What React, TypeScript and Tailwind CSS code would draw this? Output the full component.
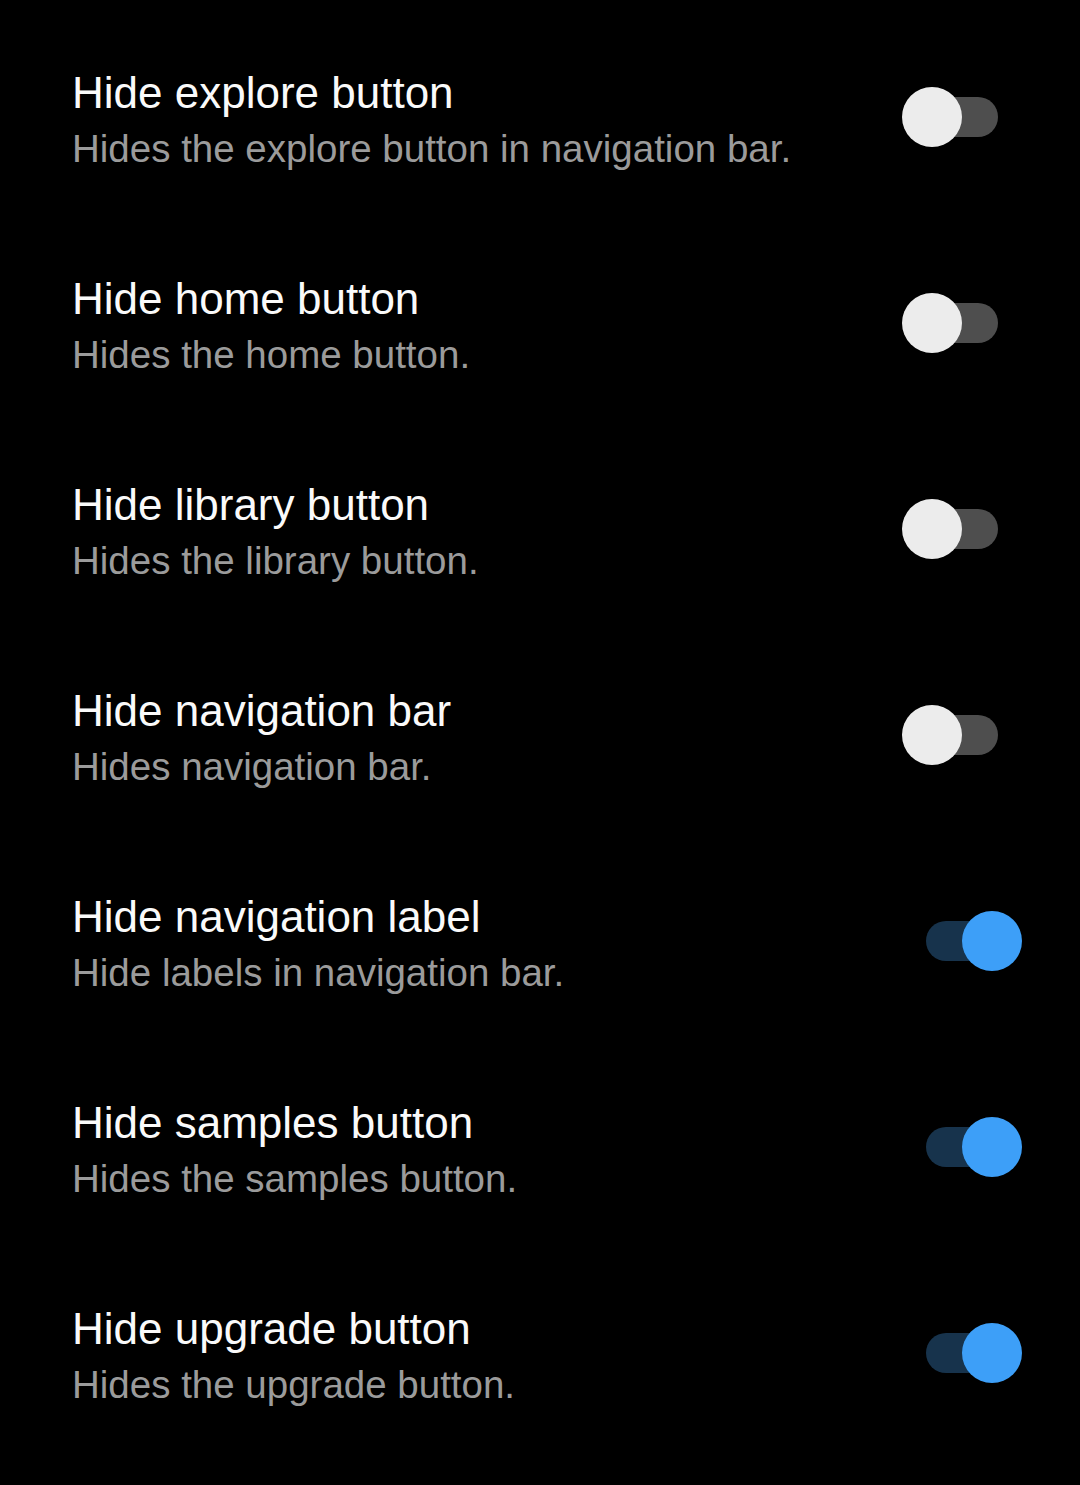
const settings = [
  { title: "Hide explore button", desc: "Hides the explore button in navigation bar.", on: false },
  { title: "Hide home button", desc: "Hides the home button.", on: false },
  { title: "Hide library button", desc: "Hides the library button.", on: false },
  { title: "Hide navigation bar", desc: "Hides navigation bar.", on: false },
  { title: "Hide navigation label", desc: "Hide labels in navigation bar.", on: true },
  { title: "Hide samples button", desc: "Hides the samples button.", on: true },
  { title: "Hide upgrade button", desc: "Hides the upgrade button.", on: true },
];

function Toggle({ on }: { on: boolean }) {
  return (
    <div className="relative w-[120px] h-[60px] shrink-0">
      <div
        className={
          on
            ? "absolute left-[24px] top-[10px] w-[72px] h-[40px] rounded-full bg-[#17334c]"
            : "absolute left-[24px] top-[10px] w-[72px] h-[40px] rounded-full bg-[#4e4e4e]"
        }
      />
      <div
        className={
          on
            ? "absolute left-[60px] top-0 w-[60px] h-[60px] rounded-full bg-[#3d9ff8]"
            : "absolute left-0 top-0 w-[60px] h-[60px] rounded-full bg-[#ececec]"
        }
      />
    </div>
  );
}

export default function App() {
  return (
    <div
      className="min-h-screen w-full bg-black pt-[17px] pl-[72px] pr-[58px]"
      style={{ fontFamily: '"Liberation Sans", Arial, sans-serif' }}
    >
      {settings.map((s) => (
        <div key={s.title} className="h-[206px] flex items-center justify-between">
          <div className="flex flex-col">
            <div className="text-[44px] leading-[56px] text-[#fafafa]">{s.title}</div>
            <div className="text-[38.5px] leading-[55px] text-[#9b9b9b]">{s.desc}</div>
          </div>
          <div className="mb-[7px]">
            <Toggle on={s.on} />
          </div>
        </div>
      ))}
    </div>
  );
}
